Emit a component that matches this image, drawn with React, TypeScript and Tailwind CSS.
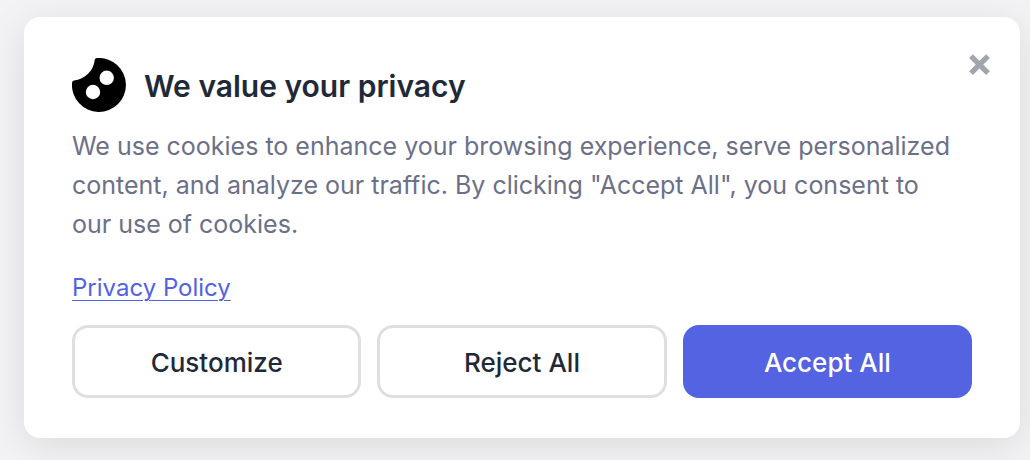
export default function App() {
  return (
    <div className="min-h-screen bg-[#f3f3f6] pt-[17px] pr-[10px] pb-[22px] pl-6 font-['Inter',sans-serif]">
      <section
        aria-labelledby="cookie-title"
        className="relative rounded-2xl bg-white px-12 pt-[41px] pb-10 shadow-[0_8px_40px_rgba(0,0,0,0.1)]"
      >
        <button
          type="button"
          aria-label="Close"
          className="absolute top-9 right-7 flex size-6 items-center justify-center text-[#a3a5ae]"
        >
          <svg viewBox="0 0 24 24" className="size-6" fill="none" stroke="currentColor" strokeWidth="5.4">
            <path d="M3 3.2L20 20.2M20 3.2L3 20.2" />
          </svg>
        </button>

        <div className="flex items-center gap-[18px]">
          <svg viewBox="0 0 54 54" className="size-[54px] shrink-0">
            <path
              d="M25 0A27 27 0 1 1 0 25Q0 22.8 2 22.6C13 21 21.5 13 22.7 2Q23 0 25 0Z"
              fill="black"
            />
            <circle cx="34.7" cy="19.8" r="7.2" fill="white" />
            <circle cx="21" cy="34" r="7.2" fill="white" />
          </svg>
          <h1 id="cookie-title" className="pt-0.5 text-[30px] leading-10 font-semibold text-[#1f2937]">
            We value your privacy
          </h1>
        </div>

        <p className="mt-[15px] text-[25px] leading-[39px] text-[#6b7088]">
          We use cookies to enhance your browsing experience, serve personalized content, and analyze our
          traffic. By clicking "Accept All", you consent to our&nbsp;use of cookies.
        </p>

        <a
          href="#privacy"
          className="mt-7 inline-block text-2xl text-[#5362e2] underline decoration-1 underline-offset-4"
        >
          Privacy Policy
        </a>

        <div className="mt-[21px] grid grid-cols-3 gap-4">
          <button
            type="button"
            className="h-[73px] rounded-2xl border-3 border-[#dedfe1] pt-0.5 text-[26px] font-medium text-[#1f2937]"
          >
            Customize
          </button>
          <button
            type="button"
            className="h-[73px] rounded-2xl border-3 border-[#dedfe1] pt-0.5 text-[26px] font-medium text-[#1f2937]"
          >
            Reject All
          </button>
          <button
            type="button"
            className="h-[73px] rounded-2xl bg-[#5463e1] pt-0.5 text-[26px] font-medium text-white"
          >
            Accept All
          </button>
        </div>
      </section>
    </div>
  );
}
